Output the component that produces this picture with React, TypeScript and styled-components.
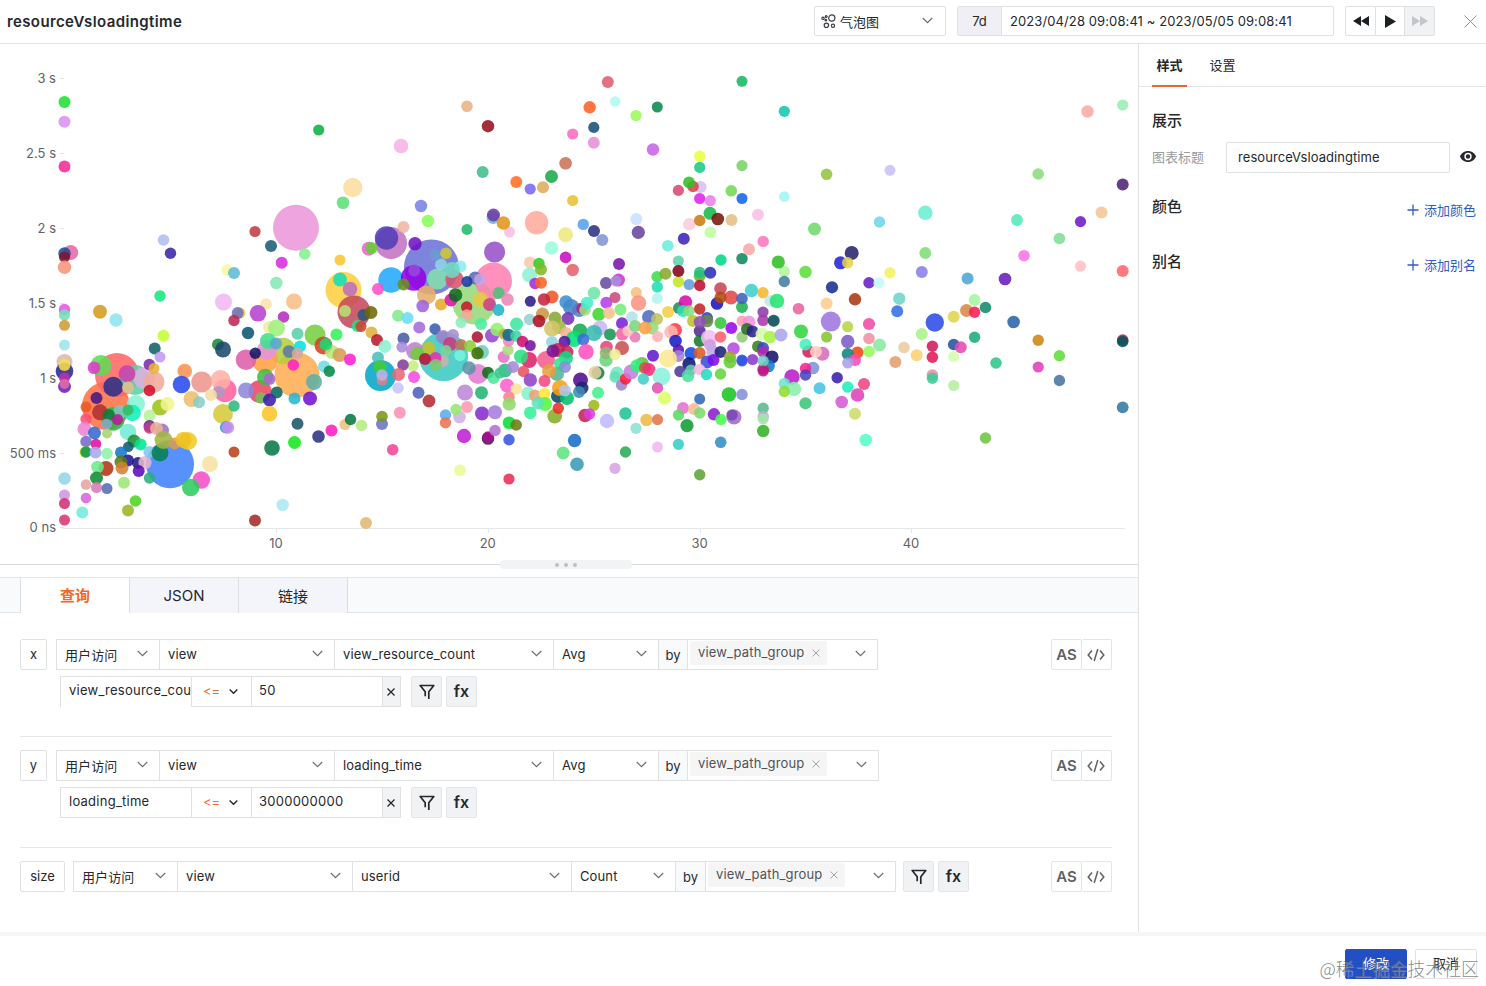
import React from "react";
import styled, { createGlobalStyle, css } from "styled-components";

const BUBBLES = `
64.5 102 6 1fdf30|64.5 121.8 6 db90f0|64.5 166.6 6 f52b98|318.7 130 5.6 0cb043|352.8 187.5 9.7 fbdd9d|343 202.7 6.3 5cde77|296 227.8 23 ea96da|255 231.5 5.6 c03c45
271 246 6 1a5a78|304.7 254 5.8 84f08e|281.7 262.7 6 da28e4|163.5 240 5.8 b0bff0|170.5 253.3 5.7 3a24a8|70.7 252.5 7.5 e667a4|64.5 253.5 6.2 1d4b9a|64.5 257 5.6 80132c|64.5 267.3 6.7 f8937a
227 270 5.7 f7f7a5|234 273 6 5cbcd6|340 260 5.5 fbc431|276.3 283 6.2 84e8b3|160 296 5.7 10e87a|343.5 290 18 ffcf3f|340 279.6 7 0fdfb8|350 289 7.3 bd6cc0|368.7 248.7 7 e863d0|371.5 248 6 5fd22f
223.5 302 8.6 f1b8f4|294 301.5 8 f8be85|266 304 5.7 fbe2a5|64.5 309.5 5.7 e357e8|64.5 315 5.7 6fe0bb|64.5 325.3 5.5 d19c35|64.5 345 5.5 9fe3ef|64.5 362 8 e0b9a6|64.5 371.2 8.8 2b2691
64.5 365 6 f8e04c|64.5 386.5 6.5 6a1bc6|64.5 378 5.5 b833ad|64.5 384 5 dc6f9f|100 311.8 7 d19c1f|116 320 6.7 8ee5ee|163.5 335.7 6 c4ff33|154.7 348.5 6 0d6165|160 357 5.5 c19bef
240 313 5.6 e8cf50|237.7 313 6 6f6fb8|234 320.5 5.7 bd2654|258 313.3 8.3 b442cf|283.5 317 5.8 b52bc0|248 333 6.2 0d5470|269 327 6 f5e9a4|276.5 328 8.5 9ef07c|297.5 333.7 6 5acfa6|315 335 10.5 73d043
336.5 334.5 6 33f25b|218 344.5 6 1a8a3e|223 349.5 8 1b476b|255.3 353.3 5.7 0f1766|246 359.7 10.3 de5da5|265 360 13 ffa043|283 351 13.2 b6cc3c|297 375 22.5 ffad52|267 350 10 e693dc|268 341 8 3de08a
276 343.5 6 56a8d4|289 351.5 6.3 5a7aa8|300 346.5 6 00e1e6|297.5 353.5 5.8 d8a7a0|293.3 365 5.8 ff1fc2|323.5 345.5 9 d8401f|332 352 7 b4e87a|325.7 344.3 6.2 15d975|339.5 355 7 d99b52|350 359.5 6 ff1fd4
324 366.5 6 6fdce2|329.3 371.3 5.7 058a45|314 382 8 5bb0a6|354 312 16.5 c4475c|345 311 6 b4e370|363.5 315 6 2a567d|371 312.5 6.5 6b6b00|357.5 326 6 22dc8a|361 326.5 5.5 d3402e|371.5 332.5 6 dcb13b|377 340 6 b8182c
378 357.5 6 48bfbe|117 375 22 ff6665|101 365.5 10.5 5edb52|94 367.7 6.3 dc3cc8|127 373.8 8.5 cf3fae|113.3 386.7 10 2a2f86|135 380 15 56d3a4|144 378 10.8 deb0e0|154 382 10.5 f0ab99|149.3 364.5 5.8 7a2ba5
154 368.5 5.5 eab13a|149.5 390.5 5.8 cc102b|128 387.5 6 e4c08d|184.7 371 7.3 fa9250|181.5 384.5 8.8 2649ee|201.7 382 10.5 eb958c|220.5 380 10 ffb0a6|225 390.5 11.5 ff5f9d|219 392 6 b295c8|211 395 6 f5dda0
191.5 399 8 efbd6b|199 402.3 6 85ceca|246 390.5 8 8c86d8|260 391.5 11.5 eb4561|265.3 377 8.3 3bc142|269.5 379 6 ae63d0|261 398 5.7 6cc35c|276.7 392.5 6 07665d|269.5 400 6.5 3c1dac|294.5 398.5 6 26b7cd
310 398.5 7 7111cf|96.5 398 6 4a1585|106 406 24 ff7246|86 407 5.5 e85a24|100 412.3 8 b02f30|86 419 5.7 ff4d75|160 407.5 8 9dc217|167.5 404 7 f1f58e|223 414 10 d6c938|234 406 5.7 2bba7c|269.5 413.7 7.8 fbc428
297.5 423.8 6 1b5468|226 427.3 6.2 2aa4dc|228 427.5 6.2 c98cf0|136 404 9 84f3d2|120 412 7 7cc7bd|132.5 413 8.3 12eebb|128 410 5.5 35bb63|149.5 415.5 6 b8f19a|113 419 11.8 2ab848|109 415 6 107a3e
117.5 419.5 5.5 b8189a|107 424 5.2 8aa3cf|84.5 429 7 ed82d4|94.5 433 6.5 3568cc|107 433.5 5 a8d36e|128 432 8.3 74ecd2|149.5 426 6 5b2a8e|149.5 428 5.8 c63a8e|162 430.5 7 9a70c4|156.5 428.5 6.5 edb294
86 441.5 5.7 7a66cc|96 444 5.3 e30c96|85 452 5.7 d8f03a|86 452 5.7 0b9346|95.5 452.5 6 a9a6ef|107 453.5 5.7 8bf3aa|134 441 6.5 1b8e2e|128.3 446.7 5.3 0b5c70|140.7 444.5 6 00e690|121 452.5 6 1277cc
128 460.5 6 19149a|121 462 6.5 5a7a10|122 468 6.5 d67e33|106 468.5 7.5 b33310|97.5 467 6.3 6ae98c|96.5 478 6.5 0f8a34|138 463 6 1b1b7a|145 462.5 6.6 e6b5cc|138.7 471 6 5a0cb6|149.3 452 6 7fc8ec
86 484.5 5.3 e6a3a0|96.5 487.5 5.5 d97ab8|107 488.5 5.5 536bb3|124 482.8 6 9be874|86 498 5.3 d863e0|82.3 512.5 6 72ecdf|135.5 501 5.8 4bd41c|128 510.5 6 9ab524|64.5 478.5 6.3 93d6e6|64.5 495 5.5 cf93e3
64.5 503.5 5.5 d03073|64.5 520 5.5 dd3470|149.5 478 5.7 28b07b|170 464.3 24 3f7ffb|160 453 8.5 058052|163.5 440 9 a2b63d|174.5 443.5 6 dd9a55|188 441 9 eccb22|183.5 440 8 f0c020|210 464 8 f6e2a0
201.3 480 8.7 f64dc8|190.7 487.5 8.7 2ccc5e|234 452 5.5 b93f16|272 448 7.8 067848|294.5 442.5 6.5 13e81c|318.5 436.5 6.3 2b317f|331.5 430.5 6 ff1cc2|345 424.5 5.5 f0bd7d|350.5 419.5 5.7 067843|361.5 425.5 5.7 b6eb7e
282.7 505 6.2 aae8f4|255 520.5 6 a32a26|366 523 6 dfb970|380.5 375.5 15.5 00a7c6|607.8 82 6 e05d70|742 81.3 5.5 12b860|467 106.3 5.8 e8b183|589.7 107.3 6.2 ff6024|615.2 101.5 5.3 adfaf4|657.3 107 5.5 08894c
636 115.5 5.6 9cfa57|488 126.2 6.2 950f1d|593.8 127.4 5.6 144e75|572.7 134 5.6 fb6bc0|593.8 142.7 6 e68ed8|653 149.5 6.2 c763e6|401 146 7.3 f8b2e6|699.7 156.2 5.6 e8ff38|699.7 167.4 5.6 16cb80|742 165.6 5.6 77d561
565.6 163.3 6.3 c97257|482.7 172 6 41be88|516.3 182 6 ff6d22|530.2 189 5.6 7568ef|543 187.3 6 e1a957|551.5 176.5 6.5 17aa47|572.7 200.5 5.6 e8c22e|421 206 6.2 7a80e6|428 221 6.2 84ff55|403.5 227 6 eeb5a3
493 217.5 6.5 65b9d0|493.5 215 6.5 6c3aa5|509.5 232 5.5 fcbbe6|503.4 223 6.8 e0951a|536.6 222.8 11.7 ffaa9b|467 229.4 5.5 1fba69|565.6 234.7 7.4 ece881|583.3 224.4 5.7 55a0ef|594 231 6 2a2f80|602.3 240 6 8193d4
636.3 219 6 c8e0ff|638.3 232.3 6.6 68449b|678.4 190.4 5.6 d7486f|700.5 187 6 d7bdf4|693 186.5 5.8 d7434b|689 182.4 5.9 2fbf21|699.7 198.5 5.6 dc23ec|710.3 200.7 5.6 e880ec|731.3 190.8 5.8 73d952|742 198.5 5.5 1260ee
710 213.3 6.5 16b84a|717.8 219 6.3 751708|731.5 220 6 e7bd85|689.3 224.3 6.2 facbd9|699.7 220.5 5.7 ca7a12|710.3 232.3 5.8 bcff9a|683.8 238.7 6 3a24ba|667.8 245.7 5.8 6decdc|391 243 16 c372c1|386.5 238 11.7 523db8
494.6 252 10.5 9550c8|551.5 248 6.8 99fddb|565.6 257.4 5.8 cc09bd|619 264 6 7a15ac|678.4 261 5.5 62cfa9|721 260 5.7 00d888|742 258.6 5.7 0f8560|415 243.8 6.7 7110c6|431.5 267 27.5 6b72d6|391 280 12.7 22a9fb
378 289 6 ff4ec6|413.5 278 12.7 9400e6|414.3 270.5 6 9747dd|403.5 284.5 6 6a8e1e|437.5 279 10.5 84e0ad|441 264.5 6 8ed5e6|435 255 6 6b9ad6|446 253.3 5.8 cfc934|460.5 266.5 6 8eeaf2|452 270 8 70ddc0|454.5 279.5 9.2 d9516b
474 303 21.5 96d979|493.5 281 18.5 ff7fb2|426.5 295 9.5 e8ad6b|422.7 306 6.3 9f62dd|441 304.5 6 e6ab23|451 300 6.5 d911a5|455.5 295 6.8 0b681e|475 278 6.5 5b6bb5|467 281.5 5.5 173ba0|480 279.5 6 c3a3e8
466.7 307 5.7 c8172b|467 315 5.7 f8a898|480.5 299.5 7.5 e9ca45|489.5 304.5 6.5 d33a8a|498.5 310 5.9 1bb4cd|498.7 293 6 49c27a|507.5 299.5 6.3 eb86b8|461 322.5 5.5 8feabf|481 324 6 4aeb9e|398 315.7 6 84e98c
407.5 318 6 6adbf6|419.3 327.5 6 a868dc|435 329 5.7 3a5bb0|403.5 338.5 6 4a5aa0|402 347 5.6 a68adb|385 346.5 6.5 8bf1cf|443.5 356.5 24.5 39c9c1|443 337 7 9f80c8|453 335 6 a58fd0|450 344 7 c83a7a|461 345 6 c67152
470 346 6 8ad135|477.3 337 5.7 ae0f35|482 352 7 6ecfbe|477.5 353.3 6.2 3a6c00|460 355.5 5.7 77f5df|446 350.5 5.5 7dd398|415 351 9 bd7ed4|417 353.5 6.8 6ccf35|429 348 6.5 c8c226|443 361 6 c8b2b0|435.5 358 6 f02bb0
425 359 6 c00f33|436 365 6 80c96f|413 366 5.7 c7ee7c|403 365 5.8 823d9b|398.5 374.5 6.5 e56a78|414 377 6 f34be4|380 367 6.5 47cc2c|382 380 5.5 e0808a|382 375 5.7 bcb3e8|398 388 5.8 c8c4fa|418.5 392.7 6 4a5fbc
429 401 6.4 b22a2e|465 392.5 8 bb87d6|481.5 392.7 6.5 1eb673|478 374 10 e07cd0|469 368 6.7 5b93a8|488 372.7 6 0d6b1a|493.5 378 6 4de59b|505 370.5 7 2cbb88|500 373 5.6 3dc58d|513 367 6 a688db|503.7 357 6 e570cc
508 350 5.7 a9dd76|492 335.5 7 9a42d1|497 329.5 6.8 8ef16a|504 334 5.5 c4ad2e|508.5 341 5.7 f87ec6|508.5 335 6.2 0b6a8e|516 336 5.7 3dd3a0|516.5 324 6.5 3ee6a0|522.5 341.5 5.7 d20a6c|530.3 345.5 5.5 7410a2
529 360 8 e01f6c|521 356.5 7 2be07f|523.5 371.5 5.8 e75260|530.3 380 6.7 8f40c6|507 385.5 7 fb60d0|516.3 389 5.8 fbe596|509 397 5.8 ff7b91|530.3 301.3 5.5 2c1888|552 297 6.5 ee5520|544 299.5 6.2 c5233f
530 262.5 6 fcc7ae|529.5 275 7.5 90f0d2|539 263.5 5.7 2ecc20|541 269.5 6 80b828|535 283.5 5.7 a32bd6|541 282.7 6 fa6423|572.7 270 6.2 e4626b|571 307 8 4183c9|566 302 6.7 3f8cd0|579 310 7 4e81c6|582 308.5 5.7 b0217e
585 310 5.8 a0dc84|587 303 6.2 43efcb|594 293 6.3 6de6a8|606.3 302.7 6 b83aef|615 297.5 5.5 ce4a7a|606 283 6 684aa0|618.5 280 6.5 d033cc|616 281 5.5 a98be0|598.8 314.3 6.5 3dd42c|620.5 309.5 6 79ec80|609 313 6 f3c18c
568 318.5 6.5 7433b3|529.5 319.5 5.7 94d2ce|542.5 314 6.5 c99442|539 321 6.3 ae0e20|555 318 6.5 88a834|559 327 7 95b83c|552 328.5 8 d3c466|566 333 6 f5b58d|552 342 6 8fd4dc|580 331 7.5 13ae4c|600 328 7.5 c7b7f8
594 333 8 3ab9b0|610 334.5 6 159554|574 339 8 00e273|583.3 339.5 6 3a6cd8|564.5 341.7 6 5a10a4|622 323.3 6 7420d4|622.5 334 6.5 f363a4|635 337 5.5 e17bb3|628 331 5.5 f8c5c0|636.3 292.5 5.5 f3c07e|638.5 303 7.7 fc9283
632 317 5.8 b4e1e8|635 326 6 7cd67e|649 317 7 5068bd|657 319 6 c0c35d|652 328 6.5 8fdd80|645 328 6.5 fda048|657.5 336.5 5.5 ffb0b5|657 276.7 5.6 3ddd50|665.5 273.7 6 88a92b|657.3 287 5.7 1fe0b0|657.3 298.5 5.6 b5f3ee
678.4 281.7 5.7 c0e820|678.4 271 6 850018|689 284.5 5.5 5d9edb|699.7 276 6 5fb42c|699.7 272.5 5.7 20c07a|699.7 285.5 5.7 bf0a30|710.3 272.7 6 2a2db8|720.5 288.5 6.3 c64555|717 303.5 6.3 1d10ba|731 297.5 7 e34644
720.5 297.5 6 b0490a|742 307 6 1bb24e|742 298.5 5.8 3c62ba|668 312 6 f3cf48|679 308 6 218a5f|685.5 302 6.7 d80ca8|683 311 6 2ee0ad|689 311 5.7 85dd7d|699.7 309 5.7 bf2620|693 321 6 bec02a|707 318 6 3240b0
707 321 6.3 6a8a46|699.7 331 6 532a8e|699.7 322 6 8d4fb8|720.5 323 6 35c53a|731.3 328 6 9b04ef|742 321 5.5 ff9db0|675 330 7 ff3d45|671 332 6.8 fcb7b3|675.5 341 6.3 191ac2|699.7 341 6 137a2a|709 338 8 f0bdf0|710 345 6 d29ade
720.5 337 5.8 ff5b6e|742 337 5.7 94c877|678.4 350 5.7 5a10ad|678.4 356 6 a080da|691 353.5 6.5 0f4be6|699.7 353 6 dd5a20|713 352 6.5 c0a8e8|720.5 352 6 192176|733.5 348.5 6.2 b64be5|668 358.5 9 fbe791|707 362 6.5 3a4bdd
689 364 6.7 0b1573|713.5 360 6 7a0ae8|730 357 6 a5a32a|730 362 6.5 64cc34|742 361 5.5 3859de|680 371.5 5.7 4a3a98|688 376 6.2 48dfa0|691 370 5.6 62cfae|699.5 369.5 5.7 fcb8dc|706.5 374.5 5.7 1fdcc0|720.5 374 5.7 62d63a
586 351.7 7.7 ff4fc0|546 360 9 f55d8e|567 352 6.5 d02055|558 350 7 c4204a|553 351 6.5 7b1592|566 358 7 12d984|560 363.5 6 2ee88a|565 367 6 8b8bdc|557 374 7 52b693|549 371 7 e3a03f|544.5 381 6 f3487f
606.5 347 6.3 e9427c|606 360 6.7 68d77d|606 353 6.3 8eb873|622 348 7 c75252|615 354.5 5.7 f0ee95|653 355.7 6 6417cf|598 373 6.5 137d45|595 372.5 6.5 e8d09f|617 373 6.5 75e3c2|615 377 5.7 60dfb4|621.5 385 5.7 9a83d2
625.5 379 5.7 ff1838|642 364 7 66bc46|631 372 7.5 cd79dc|637 366 6.8 30f07e|645 368 6 c0603a|649 369.5 6.5 f52c80|643.3 379 5.7 3fcfc4|661.5 376.5 9 8bf0db|657.5 388 5.7 e34fb4|664.5 398 6.7 deff66|580.5 380 7.5 500a8e
582 388 6.5 14286e|579 392 6 3d87b3|558 396 7 0e4464|560 388 8 f7a013|567 398 7 00bf68|565 390.5 6 b4c4e8|528 393.5 6.7 86f1cc|535 395.5 6 efa06f|544.5 393.7 5.8 ffe833|598 392.7 6 42f08c|729 394.5 7.3 16c41e
742 394.5 5.7 8090d8|699.7 399 5.5 2f65b4|382 424 6 6a71c4|382 416.5 5.8 7a9619|399.8 412.7 6 fb90b9|392.7 449.7 5.8 f5459b|445.5 415 5.7 5ca9ec|445.5 422.7 5.7 ea7450|459.5 417 6.3 cfb0e6|456 409.5 5.7 96e676|467 407 6 ff99b3
464 436 7.2 bf1ed4|482 413.5 7 852acb|495 412.3 7 a57cdd|488 438.5 6.3 3d1264|488 437 5.7 a80f8a|495 430.5 5.7 b26fd4|509.2 404 6.6 91d96a|509 422.8 6.3 08dc34|516.2 425 5.8 6b7c14|509 439.8 5.7 3455df|530.3 412.7 6.3 33f098
460 470.3 5.9 e8fb96|509 479 5.6 e92a54|545 404 7 52f83a|538 403 6.5 5de3b8|554.7 416.3 7.3 84ac22|558.3 408.3 5.7 e72e2a|593.8 405.3 5.6 a0b71c|585 415.5 6.7 c3224f|589.5 414 5.7 dc3ce3|607 421 7.2 bdbaff
574.6 440.5 6.7 166dc8|563.2 453 6.5 5ce57f|577 464.2 6.8 3b99b5|625.5 413.5 6.2 1cc494|625.5 452 5.7 27aa57|615 468.3 5.6 d8a1e4|636 428.3 5.6 8edfd0|646.5 420 6.2 edba45|657.5 419.6 5.6 e17448|657.5 447 5.5 efb8f4
678.4 444.3 5.6 33cfc5|683 408 6 e770d2|678.5 415 5.7 5bd960|694 409 6 f9b98d|699.7 413 5.7 78db6d|687 425.6 6.6 119b33|714 414.3 6.2 8b1ad2|721 419.5 5.7 45ff4a|734 417 7.5 9d69cc|732 415 5.7 774ab0|720.7 442.3 5.8 2f8fc4
699.7 474.7 5.7 5da336|784.3 111.3 5.6 13c6ac|1087.5 111.5 6.2 f8aaa6|1122.7 105 5.6 97edb1|826.6 174.3 5.8 92c542|890 170.3 5.5 cbc0f6|1038.2 174 5.8 8ade7c|1122.7 184.6 6 492174|784.3 196.5 5.3 a0f5f2|758 214.7 6 f7bfe6
814.5 229 6.5 70d96f|879.5 222 5.7 6ed4ec|925.3 212.8 7.3 6beed2|1017 220 5.9 50ebb4|1080.5 221.6 5.6 6c17c8|1101.5 212.5 6 f4c695|763.2 241.4 5.7 ff74bf|749 249.2 6 f6a9a8|1059.4 238.5 5.8 80dc98|851.7 253 7 25236a
840.5 262.8 6.5 2222d8|847.7 262.8 5.7 e4d248|925.3 253 5.9 80dc78|1024 255.7 5.8 f973e8|1080.5 266.2 5.6 ffc1c6|1122.7 271 6 ff656c|784.3 271.5 5.6 aff69a|778.3 262 6.6 30bd23|805.5 272 6.2 5edc3c|784.3 281.5 5.7 437d9d
751.5 290.5 6.7 3ecfcc|763 292.7 5.7 efb92b|770 301 5.7 c0e6ee|777 301 7.3 26e271|832 287.3 6.1 162c95|869 282.7 5.7 651ec4|879 283 5.6 c4f8f8|890 272.8 5.6 f5f15e|921.8 272 6 867ee8|967.6 278.4 6 4ca4d4|1005 279 6.3 651bbc
855 299.3 6.2 a93810|826.6 303.6 6 fbcb8f|798.5 308.7 5.8 e8639f|763 312 5.6 8a3ca8|763 320.3 5.8 ac35ab|749 322 6.5 f193d8|773.7 320.7 6 004a52|899.3 298.7 6.2 6dd5c8|897.2 311.3 6 336de6|974.6 300 5.9 a4f59e
966.5 310.5 6.5 d7884a|974.6 312.3 5.7 fa1a55|985.5 307.5 5.8 108a6b|953.7 316.8 6 e2d24e|1013.6 322 6.3 2961a8|830.8 321.6 10 9d76de|934.8 322.5 9.2 2b4be6|747 329 6 2b6b20|752.5 331.5 6 2a1f8c|762 334 6.5 d9f9b0
770 337 6.3 a8f440|781 335 6.5 aba4ef|801 331.5 7 32d53d|847.7 326.7 5.6 bad44a|869 324 6.1 f048a6|826.6 337 5.6 87c42d|847.7 341.5 6.7 7a5bca|869 338.5 5.8 f090a4|921.8 334 6 a8f289|974.6 337.3 5.7 1aab78|879.5 345 6.5 86ea9c
869 351.5 5.8 97f85c|758 346.5 6 3d8018|763 348 6 304ad0|763.2 352 5.8 b628a8|772 357 6.6 17106f|742 360 5.5 3455df|752.6 359.5 5.6 8b38cf|768.5 366 6.3 0d7dce|763.2 369 5.8 a0404c|763.2 361 5.6 6ecfc5|763.2 371 5.6 c0128c
808.5 351.5 6.2 d81c5c|805.5 344.5 6 48efbc|822.5 353.7 7 d66cb9|816 351.7 6 ffd0c4|857.5 352.5 6 f2440f|847.7 354 6 0b857c|855 360 6 ff48b2|847.7 363 5.6 aaa0ee|904 347.5 5.8 e8cb9d|895.4 362 6 e39d6c|916.7 355.3 6 fad070
932.4 346.3 5.7 d11a55|932.4 357.2 5.8 de1a58|932.4 375 5.8 e890a4|932.4 378.3 5.7 38cb99|953.7 344.5 5.8 24529a|960.8 347.3 6 e748b3|953.7 356.5 5.6 d4fcb0|1038.2 340.3 5.7 ce8414|1059.4 355.7 5.7 5fdd38|1038.2 367 5.6 e23fb8
1059.4 380.5 5.7 4a72a0|996 363 5.8 2dc689|1122.7 340 5.8 b81f47|1122.7 341.5 5.8 00565f|1122.7 407.3 5.9 3178a0|813 368 6.3 7a93db|805.5 368.5 5.7 fb1f8f|805.5 375 5.7 4740bc|792 377 7.7 b81bc8|784.3 383.5 5.7 6be6cf
794 389 7.2 89f0ab|784.3 391.5 5.7 8fdc32|819.6 388.3 6 45c3e2|837.2 377.7 5.7 3a1dae|847.7 387 5.7 1fedbe|864 384 6 ee4384|857.5 395 6.8 dc40b8|841.7 402 6.3 d65ad3|855 413.8 6 cbdc67|953.7 385.5 5.6 b5eea0
805.5 403.3 6.1 3bc577|763.2 408.3 5.7 58b98a|763.2 416.5 5.7 c1a8d8|763.2 419 5.5 a2e8a4|763.2 431 6.2 33b120|865.7 440 6.3 54ffc8|985.5 438 5.7 6dc53d
`
  .trim()
  .split(/[|\n]/)
  .map((row) => {
    const [x, y, r, hex] = row.split(" ");
    return { x: +x, y: +y, r: +r, fill: `#${hex}` };
  })
  .sort((a, b) => Math.max(b.r, 9) - Math.max(a.r, 9));

const Y_TICKS: [number, string][] = [
  [78.5, "3 s"],
  [153, "2.5 s"],
  [228.5, "2 s"],
  [303, "1.5 s"],
  [378.5, "1 s"],
  [453.5, "500 ms"],
  [527.5, "0 ns"],
];
const X_TICKS: [number, string][] = [
  [276, "10"],
  [487.7, "20"],
  [699.5, "30"],
  [911, "40"],
];

const line = "#dfe1e3";
const ink = "#25282c";

const GlobalStyle = createGlobalStyle`
  *, *::before, *::after { box-sizing: border-box; }
  body {
    margin: 0;
    background: #fff;
    color: ${ink};
    font-family: Inter, "Noto Sans CJK SC", sans-serif;
    font-size: 13px;
  }
  button { font: inherit; color: inherit; padding: 0; margin: 0; }
  svg { display: block; flex: none; }
`;

const Page = styled.div`
  position: relative;
  display: flex;
  flex-direction: column;
  width: 1486px;
  height: 986px;
  overflow: hidden;
`;

const Header = styled.header`
  display: flex;
  align-items: center;
  height: 44px;
  padding: 0 9px 1px 7px;
  border-bottom: 1px solid #e3e5e6;
`;
const Title = styled.h1`
  flex: 1;
  margin: 0;
  font-size: 15px;
  font-weight: 600;
  letter-spacing: 0.38px;
`;
const ChartType = styled.div`
  display: flex;
  align-items: center;
  width: 132px;
  height: 30px;
  padding: 0 12px 0 6px;
  gap: 4px;
  border: 1px solid ${line};
  border-radius: 2px;
  span { flex: 1; }
  svg:last-child { margin-bottom: 2px; }
`;
const DateRange = styled.div`
  display: flex;
  width: 377px;
  height: 30px;
  margin-left: 11px;
  border: 1px solid ${line};
  border-radius: 2px;
  line-height: 28px;
`;
const RangePreset = styled.span`
  width: 44px;
  background: #f0eff6;
  border-right: 1px solid ${line};
  text-align: center;
`;
const RangeText = styled.span`
  padding-left: 8px;
  letter-spacing: 0.1px;
`;
const Playback = styled.div`
  display: flex;
  margin: 0 29px 0 11px;
`;
const PlayButton = styled.button<{ $disabled?: boolean }>`
  display: grid;
  place-items: center;
  width: 29px;
  height: 30px;
  border: 1px solid ${line};
  border-left-width: 0;
  background: ${(p) => (p.$disabled ? "#f1f2f4" : "#fff")};
  color: ${(p) => (p.$disabled ? "#c2c5c9" : "#1d2023")};
  &:first-child { width: 31px; border-left-width: 1px; border-radius: 2px 0 0 2px; }
  &:last-child { width: 30px; border-radius: 0 2px 2px 0; }
`;

const Body = styled.div`
  display: flex;
  flex: 1;
  min-height: 0;
`;
const Main = styled.main`
  display: flex;
  flex-direction: column;
  width: 1138px;
`;
const Chart = styled.svg`
  width: 1138px;
  height: 520px;
  font-size: 13px;
  fill: #5f6266;
`;
const Divider = styled.div`
  display: flex;
  align-items: center;
  height: 9px;
  margin: -4px 0 4px;
  &::before, &::after {
    content: "";
    height: 1px;
    background: #d8dcde;
  }
  &::before { width: 500px; }
  &::after { flex: 1; }
`;
const Grip = styled.div`
  display: flex;
  align-items: center;
  justify-content: center;
  gap: 5px;
  width: 132px;
  height: 9px;
  border-radius: 4px;
  background: #f2f3f4;
  i {
    width: 4px;
    height: 4px;
    border-radius: 2px;
    background: #bdbfc1;
  }
`;

const TabBar = styled.div`
  display: flex;
  height: 36px;
  margin-top: 4px;
  padding-left: 20px;
  background: #f9fafc;
  border-top: 1px solid #e3e6e8;
  box-shadow: inset 0 -1px 0 #e3e6e8;
`;
const QueryTab = styled.button<{ $active?: boolean }>`
  width: 109px;
  height: 35px;
  padding-bottom: 1px;
  border: 0;
  border-left: 1px solid #dcdfe2;
  background: #f4f4fb;
  font-size: 15px;
  &:last-child {
    width: 110px;
    border-right: 1px solid #dcdfe2;
  }
  ${(p) =>
    p.$active &&
    css`
      padding-bottom: 2px;
      background: #fff;
      color: #f5661f;
      font-weight: 700;
    `}
`;

const Queries = styled.section`
  padding: 12px 26px 0 20px;
`;
const Query = styled.div`
  height: 111px;
  padding-top: 14px;
  & + & { border-top: 1px solid #e5e6e7; padding-top: 13px; }
`;
const Row = styled.div`
  display: flex;
  height: 31px;
`;
const AxisName = styled.div<{ $w: number; $gap: number }>`
  width: ${(p) => p.$w}px;
  margin-right: ${(p) => p.$gap}px;
  border: 1px solid ${line};
  border-radius: 2px;
  line-height: 29px;
  text-align: center;
`;
const Select = styled.div<{ $w: number }>`
  display: flex;
  align-items: center;
  justify-content: space-between;
  width: ${(p) => p.$w}px;
  padding: 0 11px 1px 8px;
  border: 1px solid ${line};
  border-right-width: 0;
  letter-spacing: 0.12px;
  svg { margin-bottom: 1px; }
`;
const By = styled.div<{ $w: number }>`
  width: ${(p) => p.$w}px;
  border: 1px solid ${line};
  border-right-width: 0;
  background: #f8fafc;
  line-height: 31px;
  text-align: center;
`;
const GroupSelect = styled.div<{ $w: number }>`
  display: flex;
  align-items: center;
  justify-content: space-between;
  width: ${(p) => p.$w}px;
  padding: 0 11px 0 2px;
  border: 1px solid ${line};
  svg { margin-bottom: 2px; }
`;
const Tag = styled.span`
  display: flex;
  align-items: center;
  gap: 8px;
  height: 24px;
  padding: 0 7px 1px 8px;
  margin-bottom: 4px;
  border-radius: 2px;
  background: #f5f5f6;
  color: #505357;
  letter-spacing: 0.15px;
  svg { margin: 2px 0 0; }
`;
const Tools = styled.div`
  display: flex;
  margin-left: auto;
`;
const Tool = styled.button`
  display: grid;
  place-items: center;
  width: 31px;
  border: 1px solid #e3e5e7;
  border-radius: 2px;
  background: #fff;
  color: #5e6165;
  font-size: 15px;
  font-weight: 600;
  & + & { width: 30px; padding-right: 1px; border-left: 0; }
`;
const FilterRow = styled(Row)`
  margin: 6px 0 0 40px;
`;
const FieldInput = styled.div<{ $open?: boolean }>`
  width: 131px;
  padding-left: 8px;
  overflow: hidden;
  border: 1px solid ${line};
  border-right: 0;
  border-bottom-width: ${(p) => (p.$open ? 0 : 1)}px;
  line-height: 27px;
  letter-spacing: 0.25px;
`;
const Operator = styled.div`
  display: flex;
  align-items: center;
  justify-content: space-between;
  width: 60px;
  padding: 0 13px 1px 11px;
  border: 1px solid ${line};
  border-right: 0;
  color: #ee702e;
  font-size: 13px;
`;
const ValueInput = styled(FieldInput)`
  padding-left: 7px;
  border: 1px solid ${line};
  border-right: 0;
`;
const RemoveButton = styled.button`
  display: grid;
  place-items: center;
  width: 19px;
  padding-right: 1px;
  border: 1px solid ${line};
  background: #f2f3f5;
`;
const IconButton = styled.button<{ $gap: number }>`
  display: grid;
  place-items: center;
  width: 31px;
  margin-left: ${(p) => p.$gap}px;
  border: 1px solid #e3e5e8;
  border-radius: 2px;
  background: #f1f2f4;
  font-size: 16px;
  font-weight: 600;
  line-height: 27px;
`;

const Side = styled.aside`
  flex: 1;
  border-left: 1px solid #e0e2e4;
`;
const SideTabs = styled.div`
  display: flex;
  gap: 18px;
  height: 43px;
  padding-left: 13px;
  border-bottom: 1px solid #e3e5e6;
`;
const SideTab = styled.button<{ $active?: boolean }>`
  height: 43px;
  padding: 0 4.5px;
  border: 0;
  border-bottom: 2px solid ${(p) => (p.$active ? "#e2692a" : "transparent")};
  background: none;
  font-weight: ${(p) => (p.$active ? 700 : 400)};
`;
const Settings = styled.div`
  padding: 21px 10px 0 13px;
`;
const SettingHead = styled.div<{ $h: number }>`
  display: flex;
  justify-content: space-between;
  height: ${(p) => p.$h}px;
`;
const SettingTitle = styled.h2`
  margin: 0;
  font-size: 15px;
  line-height: 26px;
  font-weight: 500;
`;
const AddLink = styled.a`
  display: flex;
  align-items: center;
  gap: 5px;
  height: 31px;
  color: #2f5cc4;
`;
const TitleField = styled.div`
  display: flex;
  align-items: center;
  height: 31px;
  margin-bottom: 21px;
  label { width: 74px; padding-bottom: 2px; color: #979a9e; }
  > svg { margin-bottom: 2px; }
`;
const TitleInput = styled.div`
  width: 224px;
  height: 31px;
  margin-right: 10px;
  padding-left: 11px;
  border: 1px solid ${line};
  border-radius: 2px;
  line-height: 29px;
  letter-spacing: 0.06px;
`;

const Footer = styled.footer`
  display: flex;
  justify-content: flex-end;
  gap: 8px;
  height: 54px;
  padding: 17px 9px 0 0;
  border-top: 4px solid #f6f6f7;
  background: #fff;
`;
const FooterButton = styled.button<{ $primary?: boolean }>`
  width: 62px;
  height: 30px;
  margin-top: -4px;
  padding-bottom: 3px;
  border: 1px solid ${(p) => (p.$primary ? "#2250c4" : "#dfe1e3")};
  border-radius: 2px;
  background: ${(p) => (p.$primary ? "#2250c4" : "#fff")};
  color: ${(p) => (p.$primary ? "#fff" : ink)};
`;
const Watermark = styled.div`
  position: absolute;
  right: 7px;
  bottom: 5px;
  color: rgba(112, 114, 120, 0.85);
  font-family: "Noto Sans CJK SC", sans-serif;
  font-weight: 300;
  font-size: 17.9px;
  line-height: 26px;
  white-space: nowrap;
  text-shadow: 1px 1px 0 rgba(255, 255, 255, 0.35);
`;

const Chevron = ({ dark = false }: { dark?: boolean }) => (
  <svg width={dark ? 9 : 11} height="7" viewBox="0 0 11 7" fill="none" stroke={dark ? "#25282c" : "#6c7075"} strokeWidth={dark ? 1.7 : 1.2}>
    <path d="M.8 1l4.7 4.7L10.200 1" />
  </svg>
);
const Cross = ({ size, color, width = 1 }: { size: number; color: string; width?: number }) => (
  <svg width={size} height={size} viewBox={`0 0 ${size} ${size}`} stroke={color} strokeWidth={width}>
    <path d={`M.5 .5L${size - 0.5} ${size - 0.5}M${size - 0.5} .5L.5 ${size - 0.5}`} />
  </svg>
);
const Funnel = () => (
  <svg width="16" height="16" viewBox="0 0 16 16" fill="none" stroke={ink} strokeWidth="1.7" strokeLinejoin="round">
    <path d="M6.200 12.200V7.800L1.200 1.500H14.800L9.800 7.800V15" />
  </svg>
);
const Code = () => (
  <svg width="18" height="14" viewBox="0 0 18 14" fill="none" stroke="#5e6165" strokeWidth="1.5">
    <path d="M5 2.500L1.200 7 5 11.500M13 2.500L16.800 7 13 11.500M10.800 1L7.200 13" />
  </svg>
);
const BubbleIcon = () => (
  <svg width="15" height="15" viewBox="0 0 15 15" fill="none" stroke="#3b3f44" strokeWidth="1.2">
    <circle cx="10.800" cy="4" r="3.100" />
    <circle cx="5.400" cy="11.300" r="2.200" />
    <circle cx="2" cy="4.300" r="1.200" />
    <circle cx="5.200" cy="2.600" r=".9" />
    <circle cx="4.800" cy="6.200" r=".8" />
    <circle cx="12" cy="11.800" r="1.600" />
  </svg>
);
const Rewind = ({ flip = false }: { flip?: boolean }) => (
  <svg width="16" height="10" viewBox="0 0 16 10" fill="currentColor">
    <path d={flip ? "M0 0l8 5-8 5zM8 0l8 5-8 5z" : "M8 0v10L0 5zM16 0v10L8 5z"} />
  </svg>
);
const Play = () => (
  <svg width="11" height="13" viewBox="0 0 11 13" fill="currentColor">
    <path d="M0 0l11 6.500L0 13z" />
  </svg>
);
const Eye = () => (
  <svg width="16" height="11" viewBox="0 0 16 11">
    <path fill={ink} d="M8 0C4.400 0 1.300 2.200 0 5.500 1.300 8.800 4.400 11 8 11s6.700-2.200 8-5.500C14.700 2.200 11.600 0 8 0z" />
    <circle cx="8" cy="5.500" r="3.700" fill="#fff" />
    <circle cx="8" cy="5.500" r="2.200" fill={ink} />
  </svg>
);
const Plus = () => (
  <svg width="12" height="12" viewBox="0 0 12 12" stroke="#2f5cc4" strokeWidth="1.300">
    <path d="M6 .5v11M.5 6h11" />
  </svg>
);

const FilterTools = ({ first, second }: { first: number; second: number }) => (
  <>
    <IconButton $gap={first}><Funnel /></IconButton>
    <IconButton $gap={second}>fx</IconButton>
  </>
);

type QueryProps = {
  name: string;
  nameWidth: number;
  nameGap: number;
  field: string;
  method: string;
  groupWidth: number;
  filter?: { value: string; clipped?: boolean };
};

const QueryBlock = ({ name, nameWidth, nameGap, field, method, groupWidth, filter }: QueryProps) => (
  <Query>
    <Row>
      <AxisName $w={nameWidth} $gap={nameGap}>{name}</AxisName>
      <Select $w={filter ? 103 : 104}>用户访问<Chevron /></Select>
      <Select $w={175}>view<Chevron /></Select>
      <Select $w={219}>{field}<Chevron /></Select>
      <Select $w={filter ? 105 : 104}>{method}<Chevron /></Select>
      <By $w={filter ? 29 : 30}>by</By>
      <GroupSelect $w={groupWidth}>
        <Tag>view_path_group<Cross size={8} color="#a2a5a9" /></Tag>
        <Chevron />
      </GroupSelect>
      {!filter && <FilterTools first={7} second={4} />}
      <Tools>
        <Tool>AS</Tool>
        <Tool><Code /></Tool>
      </Tools>
    </Row>
    {filter && (
      <FilterRow>
        <FieldInput $open={filter.clipped}>{field}</FieldInput>
        <Operator>&lt;=<Chevron dark /></Operator>
        <ValueInput>{filter.value}</ValueInput>
        <RemoveButton><Cross size={8} color={ink} width={1.3} /></RemoveButton>
        <FilterTools first={10} second={4} />
      </FilterRow>
    )}
  </Query>
);

const BubbleChart = () => (
  <Chart viewBox="0 44 1138 520">
    <path d="M62 528.500H1125M276.500 528v5M488.500 528v5M700.500 528v5M911.500 528v5" stroke="#e4e6e8" />
    {Y_TICKS.map(([y, label]) => (
      <g key={label}>
        <path d={`M60 ${Math.floor(y) + 0.5}h4`} stroke="#e4e6e8" />
        <text x="56" y={y + 4.5} textAnchor="end">{label}</text>
      </g>
    ))}
    {X_TICKS.map(([x, label]) => (
      <text key={label} x={x} y="548" textAnchor="middle">{label}</text>
    ))}
    {BUBBLES.map((b, i) => (
      <circle key={i} cx={b.x} cy={b.y} r={b.r} fill={b.fill} fillOpacity={0.87} />
    ))}
  </Chart>
);

export default function App() {
  return (
    <Page>
      <GlobalStyle />
      <Header>
        <Title>resourceVsloadingtime</Title>
        <ChartType><BubbleIcon /><span>气泡图</span><Chevron /></ChartType>
        <DateRange>
          <RangePreset>7d</RangePreset>
          <RangeText>2023/04/28 09:08:41 ~ 2023/05/05 09:08:41</RangeText>
        </DateRange>
        <Playback>
          <PlayButton><Rewind /></PlayButton>
          <PlayButton><Play /></PlayButton>
          <PlayButton $disabled><Rewind flip /></PlayButton>
        </Playback>
        <Cross size={13} color="#8d9094" />
      </Header>
      <Body>
        <Main>
          <BubbleChart />
          <Divider><Grip><i /><i /><i /></Grip></Divider>
          <TabBar>
            <QueryTab $active>查询</QueryTab>
            <QueryTab>JSON</QueryTab>
            <QueryTab>链接</QueryTab>
          </TabBar>
          <Queries>
            <QueryBlock name="x" nameWidth={27} nameGap={9} field="view_resource_count" method="Avg" groupWidth={191} filter={{ value: "50", clipped: true }} />
            <QueryBlock name="y" nameWidth={27} nameGap={9} field="loading_time" method="Avg" groupWidth={192} filter={{ value: "3000000000" }} />
            <QueryBlock name="size" nameWidth={45} nameGap={8} field="userid" method="Count" groupWidth={191} />
          </Queries>
        </Main>
        <Side>
          <SideTabs>
            <SideTab $active>样式</SideTab>
            <SideTab>设置</SideTab>
          </SideTabs>
          <Settings>
            <SettingHead $h={34}><SettingTitle>展示</SettingTitle></SettingHead>
            <TitleField>
              <label>图表标题</label>
              <TitleInput>resourceVsloadingtime</TitleInput>
              <Eye />
            </TitleField>
            <SettingHead $h={55}>
              <SettingTitle>颜色</SettingTitle>
              <AddLink><Plus />添加颜色</AddLink>
            </SettingHead>
            <SettingHead $h={55}>
              <SettingTitle>别名</SettingTitle>
              <AddLink><Plus />添加别名</AddLink>
            </SettingHead>
          </Settings>
        </Side>
      </Body>
      <Footer>
        <FooterButton $primary>修改</FooterButton>
        <FooterButton>取消</FooterButton>
      </Footer>
      <Watermark>@稀土掘金技术社区</Watermark>
    </Page>
  );
}
